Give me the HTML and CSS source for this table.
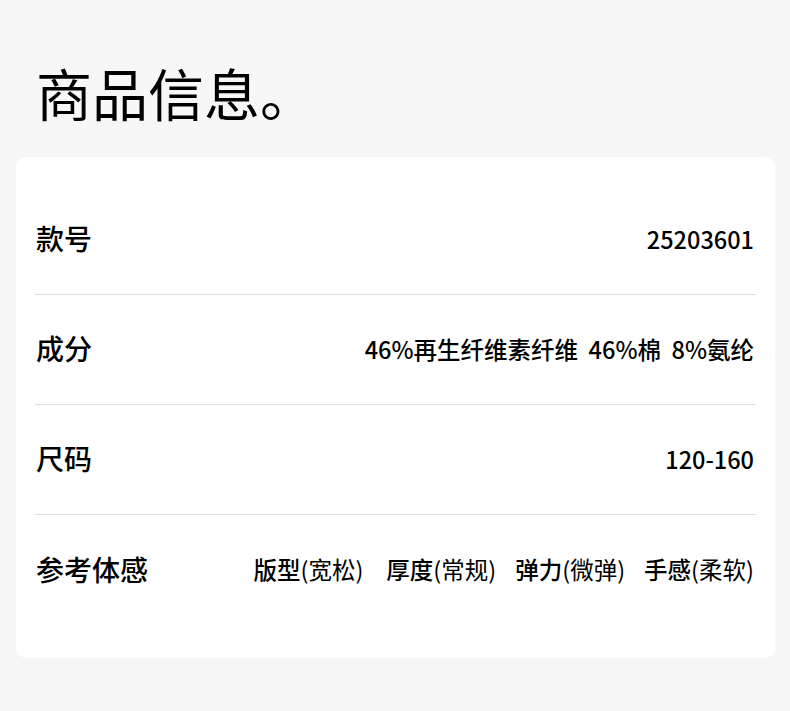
FILE: index.html
```html
<!DOCTYPE html>
<html lang="zh-CN">
<head>
<meta charset="utf-8">
<link rel="stylesheet" href="styles.css">
</head>
<body>
<div class="page">
  <h1 class="title">商品信息。</h1>
  <div class="card">
    <div class="row">
      <div class="label">款号</div>
      <div class="value">25203601</div>
    </div>
    <div class="row">
      <div class="label">成分</div>
      <div class="value">46%再生纤维素纤维&nbsp; 46%棉&nbsp; 8%氨纶</div>
    </div>
    <div class="row">
      <div class="label">尺码</div>
      <div class="value">120-160</div>
    </div>
    <div class="row last">
      <div class="label">参考体感</div>
      <div class="value feel">
        <span class="item first"><b>版型</b>(宽松)</span>
        <span class="item"><b>厚度</b>(常规)</span>
        <span class="item"><b>弹力</b>(微弹)</span>
        <span class="item"><b>手感</b>(柔软)</span>
      </div>
    </div>
  </div>
</div>
</body>
</html>
```
FILE: styles.css
```css
* { box-sizing: border-box; }
html, body { margin: 0; padding: 0; }
body {
  background: #f7f7f7;
  font-family: "Noto Sans CJK SC", "Noto Sans", sans-serif;
  color: #000;
  width: 790px;
  height: 711px;
  overflow: hidden;
}
.page {
  padding: 52px 15px 0 16px;
}
.title {
  margin: 0 0 0 20px;
  font-size: 56px;
  font-weight: 400;
  line-height: 80px;
  letter-spacing: 0;
}
.card {
  margin-top: 25px;
  background: #fff;
  border-radius: 10px;
  padding: 28px 19px 33px 19px;
}
.row {
  display: flex;
  justify-content: space-between;
  align-items: center;
  height: 110px;
  border-bottom: 1px solid #dddddd;
}
.row.last { border-bottom: none; }
.label {
  font-size: 28px;
  font-weight: 500;
  padding-left: 1px;
  padding-bottom: 3px;
}
.value {
  font-size: 23.5px;
  font-weight: 500;
  padding-right: 2px;
  padding-bottom: 2px;
}
.feel {
  display: flex;
  gap: 19px;
  font-weight: 400;
}
.feel .first { margin-right: 4px; }
.feel b { font-weight: 500; }
```
